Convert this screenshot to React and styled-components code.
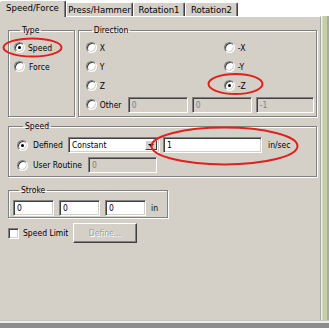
import React from "react";
import styled, { createGlobalStyle, css } from "styled-components";

const FACE = "#d4d0c8";
const FONT = `"DejaVu Sans Condensed", "Liberation Sans", Arial, sans-serif`;

const Global = createGlobalStyle`
  html, body { margin: 0; padding: 0; background: #fff; }
  body { font-family: ${FONT}; font-size: 8.5px; color: #000; }
`;

const Root = styled.div`
  position: relative;
  width: 329px;
  height: 328px;
  background: #fff;
  display: flex;
  flex-direction: column;
  overflow: hidden;
  font-family: ${FONT};
  font-size: 8.5px;
`;

const TabRow = styled.div`
  display: flex;
  align-items: flex-end;
  height: 16px;
  position: relative;
  z-index: 2;
`;

const Tab = styled.div`
  box-sizing: border-box;
  width: ${(p) => p.$w}px;
  background: ${FACE};
  border-top: 1px solid #fff;
  border-left: 1px solid #fff;
  border-right: 1px solid #404040;
  box-shadow: inset -1px 0 0 #808080;
  border-radius: 2px 2px 0 0;
  display: flex;
  align-items: center;
  justify-content: center;
  white-space: nowrap;
  font-size: 9.5px;
  line-height: 12px;
  ${(p) =>
    p.$active
      ? css`
          height: 17px;
          margin-bottom: -1px;
          padding-bottom: 3px;
          border-left: none;
        `
      : css`
          height: 14px;
        `}
`;

const Body = styled.div`
  flex: 1;
  display: flex;
  flex-direction: column;
`;

const Middle = styled.div`
  flex: 1;
  display: flex;
`;

const Panel = styled.div`
  box-sizing: border-box;
  width: 321px;
  background: ${FACE};
  border-top: 1px solid #fff;
  border-right: 1px solid #a8a8a0;
  padding: 7px 3px 0 8px;
  display: flex;
  flex-direction: column;
`;

const RightStrip = styled.div`
  flex: 1;
  background: linear-gradient(to right, #eef0e6 0 1px, #d6dcc4 1px 2px, #c6cea8 2px 6px, #a8ac98 6px);
`;

const BottomStrip = styled.div`
  height: 8px;
  background: linear-gradient(to bottom, #c8c8c4 0 1px, #ececea 1px 3px, #8c8c8c 3px);
`;

const Row = styled.div`
  display: flex;
  gap: ${(p) => p.$gap ?? 0}px;
  align-items: ${(p) => p.$align ?? "stretch"};
  margin-top: ${(p) => p.$mt ?? 0}px;
`;

const Group = styled.fieldset`
  box-sizing: border-box;
  margin: 0;
  width: ${(p) => p.$w}px;
  padding: ${(p) => p.$pad};
  border: 1px solid #808080;
  box-shadow: 1px 1px 0 #fff, inset 1px 1px 0 #fff;
  min-width: 0;
`;

const Legend = styled.legend`
  padding: 0 2px;
  margin-left: 6px;
  line-height: 13px;
`;

const OptionRow = styled.div`
  display: flex;
  align-items: center;
  height: ${(p) => p.$h ?? 19}px;
`;

const RadioCircle = styled.span`
  box-sizing: border-box;
  position: relative;
  flex: none;
  width: 11px;
  height: 11px;
  border-radius: 50%;
  background: #fff;
  border: 1px solid;
  border-color: #808080 #ffffff #ffffff #808080;
  box-shadow: inset 1px 1px 0 #404040, inset -1px -1px 0 ${FACE};
  ${(p) =>
    p.$checked &&
    css`
      &::after {
        content: "";
        position: absolute;
        left: 3px;
        top: 3px;
        width: 3px;
        height: 3px;
        border-radius: 50%;
        background: #000;
      }
    `}
`;

const Label = styled.span`
  flex: none;
  margin-left: ${(p) => p.$ml ?? 3}px;
  white-space: nowrap;
  line-height: 12px;
  width: ${(p) => (p.$w ? `${p.$w}px` : "auto")};
`;

const DirGrid = styled.div`
  display: grid;
  grid-template-columns: 138px auto;
`;

const Field = styled.div`
  box-sizing: border-box;
  flex: none;
  width: ${(p) => p.$w}px;
  height: ${(p) => p.$h ?? 16}px;
  margin-left: ${(p) => p.$ml ?? 0}px;
  background: ${(p) => (p.$disabled ? FACE : "#fff")};
  color: ${(p) => (p.$disabled ? "#808080" : "#000")};
  border: 1px solid;
  border-color: #808080 #ffffff #ffffff #808080;
  box-shadow: inset 1px 1px 0 #404040, inset -1px -1px 0 ${FACE};
  padding: 0 3px;
  display: flex;
  align-items: center;
  line-height: 12px;
  position: relative;
`;

const ComboButton = styled.div`
  position: absolute;
  right: 2px;
  top: 2px;
  bottom: 2px;
  width: 12px;
  box-sizing: border-box;
  background: ${FACE};
  border-top: 1px solid #fff;
  border-left: 1px solid #fff;
  border-right: 1px solid #404040;
  border-bottom: 1px solid #404040;
  display: flex;
  align-items: center;
  justify-content: center;
`;

const Unit = styled.span`
  margin-left: ${(p) => p.$ml ?? 5}px;
  line-height: 12px;
  white-space: nowrap;
`;

const CheckBox = styled.span`
  box-sizing: border-box;
  flex: none;
  width: 11px;
  height: 11px;
  background: #fff;
  border: 1px solid;
  border-color: #808080 #ffffff #ffffff #808080;
  box-shadow: inset 1px 1px 0 #404040, inset -1px -1px 0 ${FACE};
`;

const Button = styled.div`
  box-sizing: border-box;
  width: 64px;
  height: 20px;
  margin-left: 5px;
  background: ${FACE};
  border-top: 1px solid #fff;
  border-left: 1px solid #fff;
  border-right: 1px solid #404040;
  border-bottom: 1px solid #404040;
  box-shadow: inset -1px -1px 0 #808080;
  display: flex;
  align-items: center;
  justify-content: center;
  color: #a0a0a0;
  text-shadow: 1px 1px 0 #fff;
`;

const Annotations = styled.svg`
  position: absolute;
  left: 0;
  top: 0;
  width: 329px;
  height: 328px;
  pointer-events: none;
  z-index: 5;
`;

function Radio({ label, checked, ml, w }) {
  return (
    <OptionRow>
      <RadioCircle $checked={checked} />
      <Label $ml={ml} $w={w}>{label}</Label>
    </OptionRow>
  );
}

export default function App() {
  return (
    <Root>
      <Global />
      <TabRow>
        <Tab $w={66} $active>Speed/Force</Tab>
        <Tab $w={67}>Press/Hammer</Tab>
        <Tab $w={52}>Rotation1</Tab>
        <Tab $w={53}>Rotation2</Tab>
      </TabRow>
      <Body>
        <Middle>
          <Panel>
            <Row $gap={3}>
              <Group $w={67} $pad="1px 4px 2px 5px">
                <Legend>Type</Legend>
                <Radio label="Speed" checked ml={3} />
                <Radio label="Force" ml={4} />
              </Group>
              <Group $w={240} $pad="1px 4px 2px 7px">
                <Legend>Direction</Legend>
                <DirGrid>
                  <Radio label="X" />
                  <Radio label="-X" />
                  <Radio label="Y" />
                  <Radio label="-Y" />
                  <Radio label="Z" />
                  <Radio label="-Z" checked />
                </DirGrid>
                <OptionRow>
                  <RadioCircle />
                  <Label $w={28}>Other</Label>
                  <Field $w={60} $disabled>0</Field>
                  <Field $w={60} $ml={4} $disabled>0</Field>
                  <Field $w={58} $ml={4} $disabled>-1</Field>
                </OptionRow>
              </Group>
            </Row>

            <Row $mt={3}>
              <Group $w={310} $pad="2px 4px 1px 8px">
                <Legend>Speed</Legend>
                <OptionRow $h={20}>
                  <RadioCircle $checked />
                  <Label $w={35} $ml={5}>Defined</Label>
                  <Field $w={92}>
                    Constant
                    <ComboButton>
                      <svg width="6" height="3" viewBox="0 0 6 3">
                        <path d="M0 0h6L3 3z" fill="#000" />
                      </svg>
                    </ComboButton>
                  </Field>
                  <Field $w={99} $ml={3}>1</Field>
                  <Unit $ml={6}>in/sec</Unit>
                </OptionRow>
                <OptionRow $h={20}>
                  <RadioCircle />
                  <Label $w={55} $ml={5}>User Routine</Label>
                  <Field $w={69} $disabled>0</Field>
                </OptionRow>
              </Group>
            </Row>

            <Row $mt={7}>
              <Group $w={160} $pad="3px 4px 1px 4px">
                <Legend>Stroke</Legend>
                <OptionRow $h={16}>
                  <Field $w={41}>0</Field>
                  <Field $w={41} $ml={5}>0</Field>
                  <Field $w={41} $ml={5}>0</Field>
                  <Unit $ml={5}>in</Unit>
                </OptionRow>
              </Group>
            </Row>

            <Row $mt={5} $align="center">
              <CheckBox />
              <Label $ml={4} $w={45}>Speed Limit</Label>
              <Button>Define...</Button>
            </Row>
          </Panel>
          <RightStrip />
        </Middle>
        <BottomStrip />
      </Body>
      <Annotations viewBox="0 0 329 328">
        <ellipse cx="32.5" cy="47.5" rx="29" ry="9" fill="none" stroke="#e0201c" strokeWidth="2" />
        <ellipse cx="235.5" cy="84" rx="27" ry="10" fill="none" stroke="#e0201c" strokeWidth="2" />
        <ellipse cx="224.5" cy="146" rx="73" ry="18.5" fill="none" stroke="#e0201c" strokeWidth="2" />
      </Annotations>
    </Root>
  );
}
